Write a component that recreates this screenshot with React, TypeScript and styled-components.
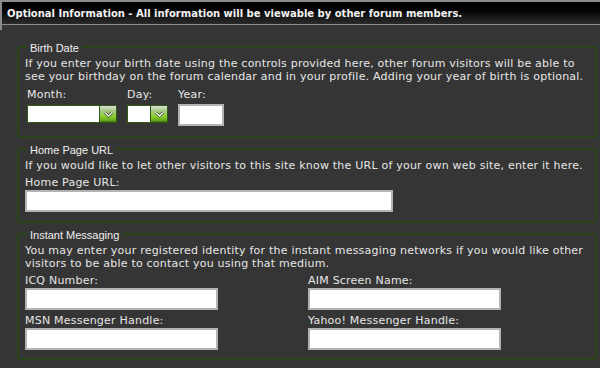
import React from "react";
import styled, { createGlobalStyle } from "styled-components";

const Global = createGlobalStyle`
  html, body { margin: 0; padding: 0; background: #353535; }
  body { font-family: "DejaVu Sans", Verdana, sans-serif; color: #e8e8e8; }
`;

const Page = styled.div`
  width: 600px;
  height: 368px;
  overflow: hidden;
  background: #353535;
`;

const TitleWrap = styled.div`
  border-top: 2px solid #8a8a8a;
  border-left: 2px solid #8a8a8a;
  padding-bottom: 5px;
`;

const Title = styled.div`
  height: 22px;
  display: flex;
  align-items: center;
  padding-left: 5px;
  background: linear-gradient(to bottom, #000 0%, #050505 40%, #2b2b2b 100%);
  border-bottom: 1px solid #8c8c8c;
  font-family: "DejaVu Sans", Verdana, sans-serif;
  font-weight: bold;
  font-size: 10px;
  color: #f2f2f2;
  white-space: nowrap;
`;

const Content = styled.div`
  padding: 9px 3px 0 17px;
  display: flex;
  flex-direction: column;
  gap: 3px;
`;

const Fieldset = styled.fieldset<{ $pb: number }>`
  margin: 0;
  border: 2px solid #2a4517;
  border-radius: 4px;
  padding: 2px 6px ${(p) => p.$pb}px 6px;
  min-width: 0;
`;

const Legend = styled.legend`
  margin-left: 2px;
  padding: 3px 3px 0;
  font-family: "Liberation Sans", Arial, sans-serif;
  font-size: 11px;
  line-height: 13px;
  color: #f0f0f0;
`;

const Desc = styled.div`
  font-size: 11px;
  line-height: 13px;
  letter-spacing: 0.22px;
  color: #e6e6e6;
`;

const Label = styled.div`
  font-size: 11px;
  line-height: 13px;
  letter-spacing: 0.22px;
  color: #e6e6e6;
  white-space: nowrap;
`;

const DateRow = styled.div`
  display: flex;
  gap: 10px;
  padding-left: 2px;
  margin-top: 5px;
`;

const Col = styled.div<{ $w?: number }>`
  display: flex;
  flex-direction: column;
  align-items: flex-start;
  gap: 3px;
  width: ${(p) => (p.$w ? `${p.$w}px` : "auto")};
`;

const SelectBox = styled.div<{ $w: number }>`
  width: ${(p) => p.$w}px;
  height: 18px;
  box-sizing: border-box;
  border: 1px solid #2e5a16;
  background: #fff;
  display: flex;
  justify-content: flex-end;
  margin-top: 1px;
`;

const Arrow = styled.span`
  width: 17px;
  height: 16px;
  box-sizing: border-box;
  border-left: 1px solid #2e5a16;
  background: linear-gradient(to bottom, #d9dfd2 0%, #a9c98a 30%, #8bcf2e 65%, #6aa81c 90%, #3f6b12 100%);
  display: flex;
  align-items: center;
  justify-content: center;
`;

const TextInput = styled.div<{ $w: number }>`
  width: ${(p) => p.$w}px;
  height: 22px;
  box-sizing: border-box;
  border: 2px solid #b3b3b3;
  background: #fff;
`;

const Field = styled.div<{ $mt?: number }>`
  display: flex;
  flex-direction: column;
  gap: 1px;
  margin-top: ${(p) => p.$mt ?? 0}px;
`;

const Grid = styled.div`
  display: grid;
  grid-template-columns: 283px 1fr;
  row-gap: 4px;
  margin-top: 4px;
`;

const Chevron = () => (
  <svg width="9" height="7" viewBox="0 0 9 7">
    <path d="M1 1.5 L4.5 5 L8 1.5" fill="none" stroke="#2c3a20" strokeWidth="2.6" />
    <path d="M1 1.5 L4.5 5 L8 1.5" fill="none" stroke="#fff" strokeWidth="1.3" />
  </svg>
);

const Select = ({ w }: { w: number }) => (
  <SelectBox $w={w}>
    <Arrow>
      <Chevron />
    </Arrow>
  </SelectBox>
);

export default function App() {
  return (
    <Page>
      <Global />
      <TitleWrap>
        <Title>Optional Information - All information will be viewable by other forum members.</Title>
      </TitleWrap>
      <Content>
        <Fieldset $pb={10}>
          <Legend>Birth Date</Legend>
          <Desc>
            If you enter your birth date using the controls provided here, other forum visitors will be able to
            see your birthday on the forum calendar and in your profile. Adding your year of birth is optional.
          </Desc>
          <DateRow>
            <Col $w={90}>
              <Label>Month:</Label>
              <Select w={90} />
            </Col>
            <Col $w={41}>
              <Label>Day:</Label>
              <Select w={41} />
            </Col>
            <Col>
              <Label>Year:</Label>
              <TextInput $w={46} />
            </Col>
          </DateRow>
        </Fieldset>
        <Fieldset $pb={9}>
          <Legend>Home Page URL</Legend>
          <Desc>If you would like to let other visitors to this site know the URL of your own web site, enter it here.</Desc>
          <Field $mt={4}>
            <Label>Home Page URL:</Label>
            <TextInput $w={368} />
          </Field>
        </Fieldset>
        <Fieldset $pb={8}>
          <Legend>Instant Messaging</Legend>
          <Desc>
            You may enter your registered identity for the instant messaging networks if you would like other
            visitors to be able to contact you using that medium.
          </Desc>
          <Grid>
            <Field>
              <Label>ICQ Number:</Label>
              <TextInput $w={193} />
            </Field>
            <Field>
              <Label>AIM Screen Name:</Label>
              <TextInput $w={193} />
            </Field>
            <Field>
              <Label>MSN Messenger Handle:</Label>
              <TextInput $w={193} />
            </Field>
            <Field>
              <Label>Yahoo! Messenger Handle:</Label>
              <TextInput $w={193} />
            </Field>
          </Grid>
        </Fieldset>
      </Content>
    </Page>
  );
}
